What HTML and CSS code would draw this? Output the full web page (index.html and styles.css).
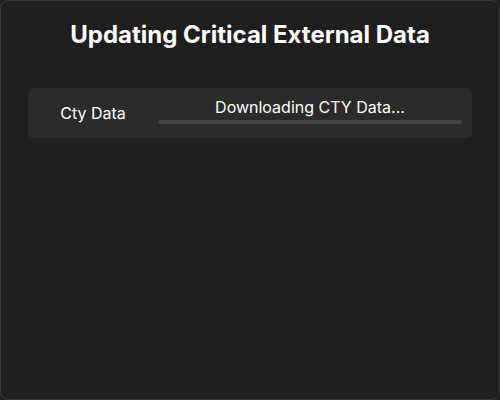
FILE: index.html
```html
<!DOCTYPE html>
<html lang="en">
<head>
  <meta charset="UTF-8">
  <title>Updating Critical External Data</title>
  <link rel="stylesheet" href="styles.css">
</head>
<body>
  <div class="janela">
    <h1>Updating Critical External Data</h1>

    <!-- Linha de download -->
    <div class="item">
      <div class="nome">Cty Data</div>
      <div class="progresso">
        <div class="status">Downloading CTY Data...</div>
        <div class="barra"></div>
      </div>
    </div>
  </div>
</body>
</html>
```

FILE: styles.css
```css
body {
  margin: 0;
  background-color: #1f1f1f;
  font-family: 'Inter', 'Noto Sans', sans-serif;
  color: white;
}
.janela {
  box-sizing: border-box;
  width: 500px;
  height: 400px;
  border: 1px solid #3a3a3a;
  border-radius: 8px;
  background-color: #1f1f1f;
  padding: 0 27px;
}
h1 {
  margin: 19px 0 0;
  text-align: center;
  font-size: 24px;
  font-weight: 700;
  line-height: 30px;
}
.item {
  display: flex;
  align-items: center;
  height: 50px;
  margin-top: 38px;
  background-color: #2b2b2b;
  border-radius: 5px;
}
.nome {
  width: 130px;
  text-align: center;
  font-size: 16px;
}
.progresso {
  flex: 1;
  padding-right: 10px;
  margin-top: -4px;
}
.status {
  text-align: center;
  font-size: 16px;
  line-height: 18px;
}
.barra {
  height: 4px;
  margin-top: 4px;
  border-radius: 2px;
  background-color: #454545;
}
```
